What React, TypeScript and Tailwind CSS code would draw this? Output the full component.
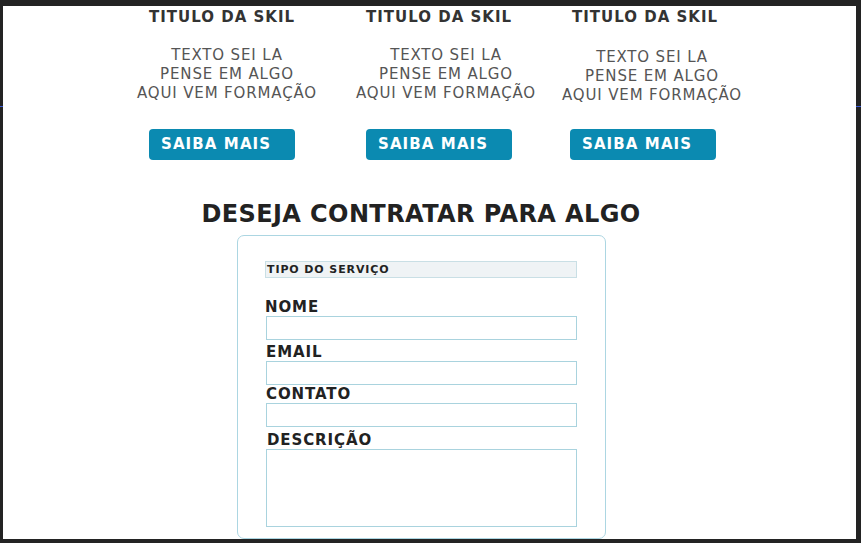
import React from 'react'

const font = { fontFamily: '"DejaVu Sans", Verdana, sans-serif' }

const skills = [
  { ml: 'ml-[134px]', title: 'ml-[12px]', btn: 'ml-[12px]', body: 'mt-[19px]', gap: 'mt-[26px]' },
  { ml: 'ml-[39px]', title: 'ml-[10px]', btn: 'ml-[10px]', body: 'mt-[19px]', gap: 'mt-[26px]' },
  { ml: 'ml-[26px]', title: 'ml-[10px]', btn: 'ml-[8px]', body: 'mt-[21px]', gap: 'mt-[24px]' },
]

function Skill({ s }: { s: typeof skills[number] }) {
  return (
    <div className={`${s.ml} w-[180px] flex flex-col`}>
      <h3 className={`${s.title} w-[146px] text-center text-[15px] leading-[20px] font-bold tracking-[1px] text-[#333] whitespace-nowrap`}>TITULO DA SKIL</h3>
      <p className={`${s.body} text-center text-[15px] leading-[19px] tracking-[0.85px] text-[#555] whitespace-nowrap`}>
        TEXTO SEI LA<br />PENSE EM ALGO<br />AQUI VEM FORMAÇÃO
      </p>
      <button className={`${s.btn} ${s.gap} w-[146px] h-[31px] rounded-[4px] bg-[#0b8ab1] text-left pl-[12px] text-[15px] font-bold tracking-[1.1px] text-white whitespace-nowrap`}>
        SAIBA MAIS
      </button>
    </div>
  )
}

function Campo({ label, ml, mt, alto }: { label: string; ml: string; mt: string; alto?: boolean }) {
  return (
    <div className={mt}>
      <label className={`${ml} block text-[15px] leading-[16px] font-bold tracking-[0.9px] text-[#222]`}>{label}</label>
      <div className={`ml-[1px] mt-[1px] w-[311px] border border-[#a9d3de] bg-white ${alto ? 'h-[78px]' : 'h-[24px]'}`} />
    </div>
  )
}

export default function App() {
  return (
    <div className="w-[861px] h-[543px] bg-[#232323] pt-[6px] pl-[3px] pr-[5px] pb-[4px] relative" style={font}>
      <div className="absolute left-0 top-[106px] w-[3px] h-[1px] bg-[#3b5bd6]" />
      <div className="absolute right-0 top-[106px] w-[5px] h-[1px] bg-[#3b5bd6]" />
      <div className="h-full bg-white overflow-hidden">
        <div className="flex pt-[1px]">
          {skills.map((s, i) => <Skill key={i} s={s} />)}
        </div>
        <h2 className="mt-[40px] ml-[198px] w-[440px] text-center text-[24px] leading-[28px] font-bold tracking-[0.4px] text-[#222] whitespace-nowrap">
          DESEJA CONTRATAR PARA ALGO
        </h2>
        <div className="mt-[7px] ml-[234px] w-[369px] h-[304px] border border-[#acd6e2] rounded-[7px] pl-[27px] pt-[25px]">
          <div className="w-[312px] h-[17px] bg-[#eff3f5] border border-[#c9dfe5] pl-[1px] text-[11px] leading-[15px] font-bold tracking-[0.9px] text-[#222] whitespace-nowrap">
            TIPO DO SERVIÇO
          </div>
          <Campo label="NOME" ml="ml-0" mt="mt-[21px]" />
          <Campo label="EMAIL" ml="ml-[1px]" mt="mt-[4px]" />
          <Campo label="CONTATO" ml="ml-[1px]" mt="mt-[1px]" />
          <Campo label="DESCRIÇÃO" ml="ml-[2px]" mt="mt-[5px]" alto />
        </div>
      </div>
    </div>
  )
}
